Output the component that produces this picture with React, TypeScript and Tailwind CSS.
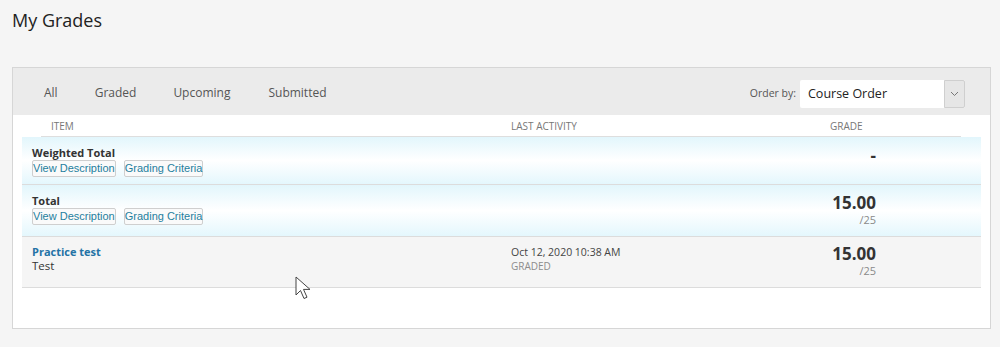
import React from "react";

const font = { fontFamily: '"Open Sans", "Liberation Sans", sans-serif' };

function LinkBtn({ children }: { children: React.ReactNode }) {
  return (
    <span className="inline-flex h-[17px] items-center rounded-[2px] border border-[#cfcfcf] bg-[#fafafa] px-0 text-[11px] leading-none text-[#1f7f9e] [font-family:'Liberation_Sans',Arial,sans-serif]">
      {children}
    </span>
  );
}

function BlueRow({ title, grade, outOf, h }: { title: string; grade: string; outOf?: string; h: string }) {
  return (
    <div className={`flex border-b border-[#dcdcdc] bg-gradient-to-b from-[#e2f6fc] via-white to-[#e4f7fd] ${h}`}>
      <div className="w-[489px] pl-[10px] pt-[9px]">
        <div className="text-[11px] font-bold leading-[13px] text-[#333]">{title}</div>
        <div className="mt-[1px] flex gap-[8px]">
          <LinkBtn>View Description</LinkBtn>
          <LinkBtn>Grading Criteria</LinkBtn>
        </div>
      </div>
      <div className="w-[200px]" />
      <div className="flex w-[165px] flex-col items-end pt-[8px]">
        {outOf ? (
          <>
            <div className="text-[17px] font-bold leading-[20px] text-[#333]">{grade}</div>
            <div className="text-[11px] leading-[13px] text-[#8a8a8a]">{outOf}</div>
          </>
        ) : (
          <div className="pt-[1px] text-[17px] font-bold leading-[20px] text-[#333]">{grade}</div>
        )}
      </div>
    </div>
  );
}

export default function App() {
  return (
    <div className="relative h-[347px] w-[1000px] overflow-hidden bg-[#f5f5f5]" style={font}>
      <div className="pl-[12px] pt-[7px] text-[18px] leading-[26px] text-[#222]">My Grades</div>

      <div className="ml-[12px] mt-[34px] h-[262px] w-[979px] border border-[#d6d6d6] bg-white">
        {/* tab bar */}
        <div className="flex h-[47px] items-start bg-[#ebebeb]">
          <div className="flex pl-[31px] pt-[16px] text-[12px] leading-[18px] text-[#555]">
            <span className="mr-[37px]">All</span>
            <span className="mr-[37px]">Graded</span>
            <span className="mr-[38px]">Upcoming</span>
            <span>Submitted</span>
          </div>
          <div className="ml-auto mr-[25px] mt-[12px] flex items-center">
            <span className="mr-[4px] text-[10.5px] text-[#555]">Order by:</span>
            <div className="flex h-[28px] w-[165px] items-stretch rounded-[2px] bg-white">
              <span className="flex flex-1 items-center pl-[8px] text-[12.5px] text-[#222]">Course Order</span>
              <span className="flex w-[21px] items-center justify-center rounded-r-[2px] border border-[#cfcfcf] bg-[#e6e6e6]">
                <svg width="9" height="6" viewBox="0 0 9 6">
                  <path d="M1 1l3.5 3.5L8 1" fill="none" stroke="#777" strokeWidth="1" />
                </svg>
              </span>
            </div>
          </div>
        </div>

        {/* column header */}
        <div className="ml-[28px] flex h-[22px] w-[920px] items-center border-b border-[#dedede] pt-[1px] text-[10px] uppercase text-[#777]">
          <span className="w-[470px] pl-[10px]">Item</span>
          <span className="w-[319px]">Last Activity</span>
          <span>Grade</span>
        </div>

        <div className="ml-[9px] w-[959px]">
          <BlueRow title="Weighted Total" grade="-" h="h-[48px]" />
          <BlueRow title="Total" grade="15.00" outOf="/25" h="h-[52px]" />
          <div className="flex h-[51px] border-b border-[#dcdcdc] bg-[#f5f5f5]">
            <div className="w-[489px] pl-[10px] pt-[8px]">
              <div className="text-[11px] font-bold leading-[14px] text-[#2473a6]">Practice test</div>
              <div className="text-[11.5px] leading-[14px] text-[#333]">Test</div>
            </div>
            <div className="w-[200px] pt-[8px]">
              <div className="text-[10.5px] leading-[14px] text-[#444]">Oct 12, 2020 10:38 AM</div>
              <div className="text-[10px] leading-[14px] text-[#8c8c8c]">GRADED</div>
            </div>
            <div className="flex w-[165px] flex-col items-end pt-[7px]">
              <div className="text-[17px] font-bold leading-[20px] text-[#333]">15.00</div>
              <div className="text-[11px] leading-[13px] text-[#8a8a8a]">/25</div>
            </div>
          </div>
        </div>
      </div>

      {/* mouse cursor */}
      <svg className="absolute left-[295px] top-[276px]" width="16" height="26" viewBox="0 0 16 26">
        <path d="M1 1v18l4.5-4.5 3.5 8 3-1.3-3.5-7.8H15z" fill="#fff" stroke="#444" strokeWidth="1" strokeLinejoin="round" />
      </svg>
    </div>
  );
}
